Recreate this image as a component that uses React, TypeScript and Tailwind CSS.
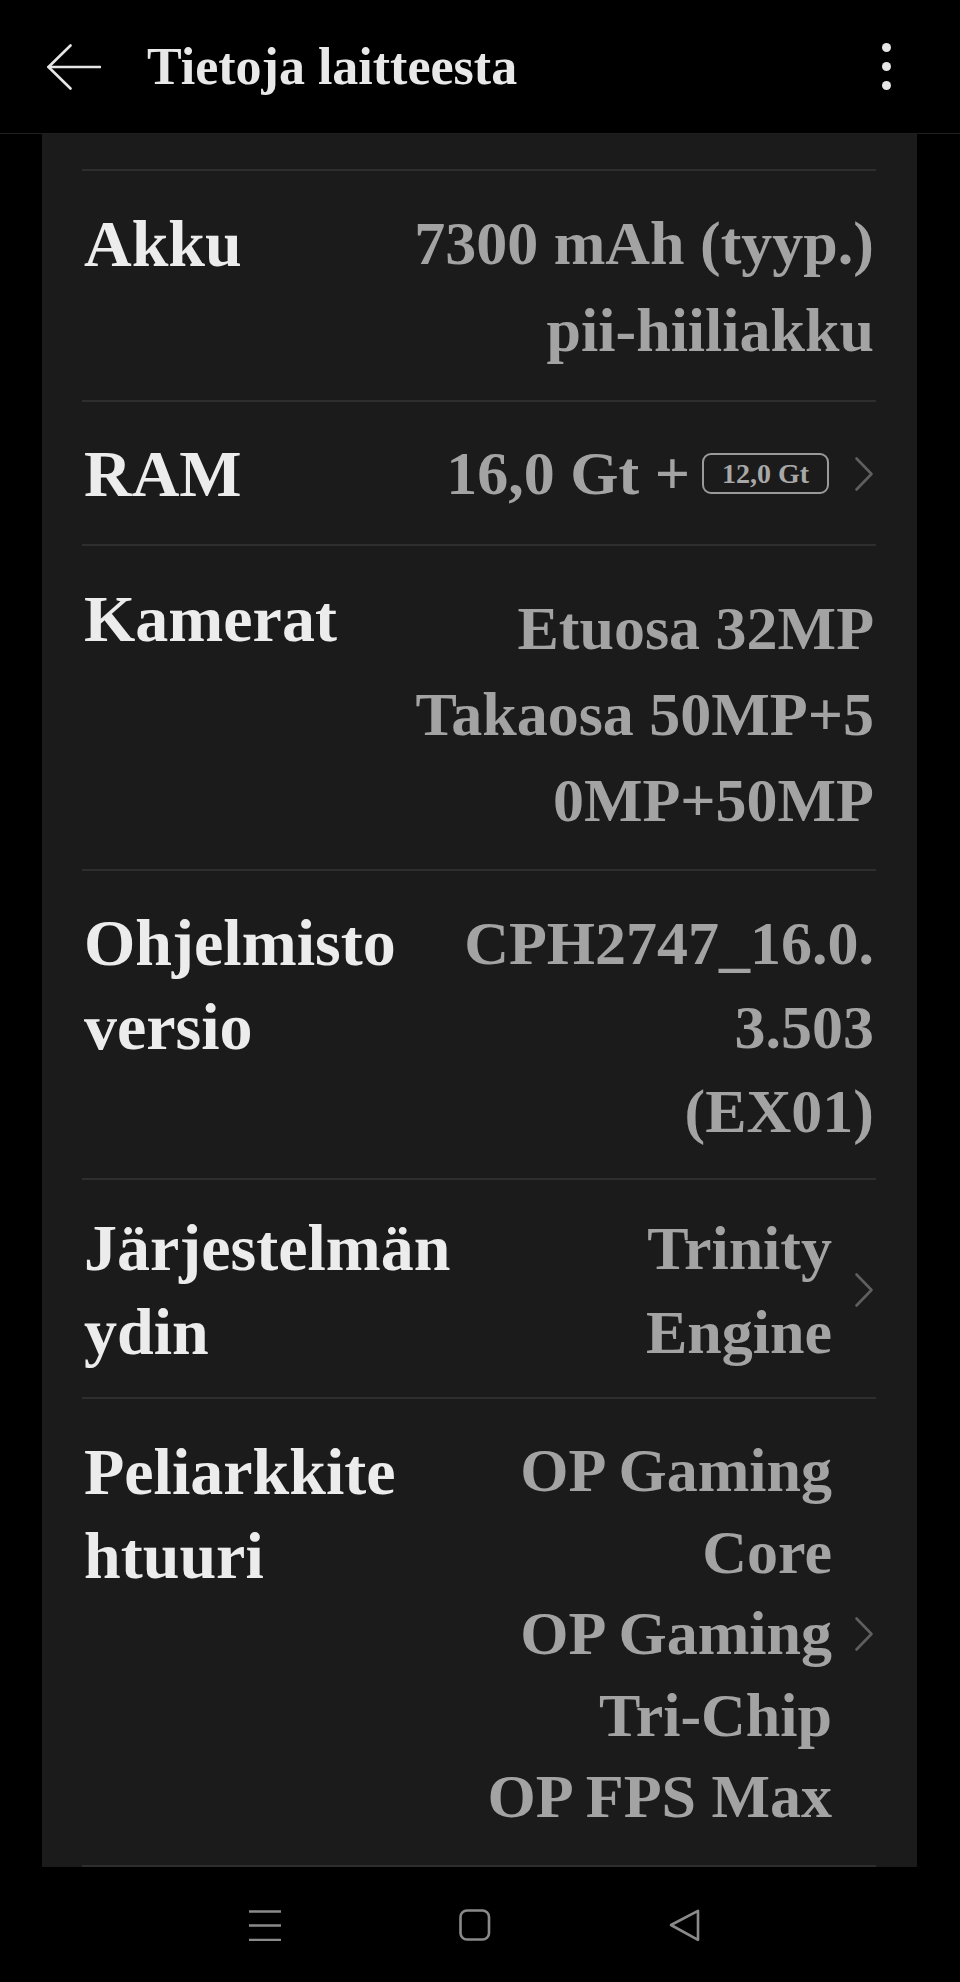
import type { ReactNode } from "react";

type Row = {
  label: string[];
  value: string[];
  rowClass: string;
  labelLeading: string;
  valueLeading: string;
  valueClass?: string;
  chevron?: boolean;
};

const rowsTop: Row[] = [
  {
    label: ["Akku"],
    value: ["7300 mAh (tyyp.)", "pii-hiiliakku"],
    rowClass: "pt-[29px] pb-[26px]",
    labelLeading: "leading-[87px]",
    valueLeading: "leading-[87px]",
  },
];

const rowsBottom: Row[] = [
  {
    label: ["Kamerat"],
    value: ["Etuosa 32MP", "Takaosa 50MP+5", "0MP+50MP"],
    rowClass: "pt-[30px] pb-[26px]",
    labelLeading: "leading-[85px]",
    valueLeading: "leading-[86px]",
    valueClass: "mt-[9px]",
  },
  {
    label: ["Ohjelmisto", "versio"],
    value: ["CPH2747_16.0.", "3.503", "(EX01)"],
    rowClass: "pt-[30px] pb-[25px]",
    labelLeading: "leading-[84px]",
    valueLeading: "leading-[84px]",
  },
  {
    label: ["Järjestelmän", "ydin"],
    value: ["Trinity", "Engine"],
    rowClass: "pt-[26px] pb-[23px]",
    labelLeading: "leading-[84px]",
    valueLeading: "leading-[84px]",
    chevron: true,
  },
  {
    label: ["Peliarkkite", "htuuri"],
    value: ["OP Gaming", "Core", "OP Gaming", "Tri-Chip", "OP FPS Max"],
    rowClass: "pt-[31px] pb-[27.5px]",
    labelLeading: "leading-[84px]",
    valueLeading: "leading-[81.5px]",
    chevron: true,
  },
];

function Divider() {
  return <div className="h-[2px] bg-[#2e2e2e]" />;
}

function Chevron() {
  return (
    <svg width="20" height="36" viewBox="0 0 20 36" fill="none" className="mr-[2px] shrink-0">
      <path
        d="M2.5 2.5 L17.5 18 L2.5 33.5"
        stroke="#5f5f5f"
        strokeWidth="2.6"
        strokeLinecap="round"
        strokeLinejoin="round"
      />
    </svg>
  );
}

function Lines({ lines }: { lines: string[] }) {
  return (
    <>
      {lines.map((line, i) => (
        <div key={i} className="whitespace-nowrap">
          {line}
        </div>
      ))}
    </>
  );
}

function InfoRow({ row }: { row: Row }) {
  return (
    <div className={`flex items-start justify-between ${row.rowClass}`}>
      <div className={`pl-[2px] text-[66px] text-[#ececec] ${row.labelLeading}`}>
        <Lines lines={row.label} />
      </div>
      <div className={`flex items-center gap-[22px] ${row.valueClass ?? ""}`}>
        <div className={`text-right text-[62px] text-[#a3a3a3] ${row.chevron ? "" : "pr-[2px]"} ${row.valueLeading}`}>
          <Lines lines={row.value} />
        </div>
        {row.chevron && <Chevron />}
      </div>
    </div>
  );
}

function NavIcon({ children }: { children: ReactNode }) {
  return (
    <svg width="32" height="32" viewBox="0 0 32 32" fill="none" stroke="#8a8a8a" strokeWidth="2.6">
      {children}
    </svg>
  );
}

export default function App() {
  return (
    <div className="flex min-h-[1982px] w-full flex-col bg-black font-['Liberation_Serif','Times_New_Roman',serif] font-bold">
      {/* Header */}
      <header className="flex h-[134px] shrink-0 items-center border-b border-[#1f1f1f] pl-[47px]">
        <svg width="54" height="46" viewBox="0 0 54 46" fill="none" stroke="#e6e6e6" strokeWidth="2.6" strokeLinecap="round" strokeLinejoin="round">
          <path d="M1.5 23 H53" />
          <path d="M23.5 1.5 L1.5 23 L23.5 44.5" />
        </svg>
        <h1 className="ml-[46px] text-[52px] leading-[60px] text-[#e8e8e8]">Tietoja laitteesta</h1>
        <div className="ml-auto mr-[69px] flex flex-col gap-[10px]">
          <div className="h-[9px] w-[9px] rounded-full bg-[#e6e6e6]" />
          <div className="h-[9px] w-[9px] rounded-full bg-[#e6e6e6]" />
          <div className="h-[9px] w-[9px] rounded-full bg-[#e6e6e6]" />
        </div>
      </header>

      {/* Card */}
      <main className="ml-[42px] w-[875px] bg-[#1b1b1b] pl-[40px] pr-[41px]">
        <div className="h-[35px]" />
        <Divider />
        {rowsTop.map((row) => (
          <InfoRow key={row.label.join(" ")} row={row} />
        ))}
        <Divider />
        <div className="flex items-center justify-between pt-[28px] pb-[27px]">
          <div className="pl-[2px] text-[66px] leading-[87px] text-[#ececec]">RAM</div>
          <div className="flex items-center">
            <span className="whitespace-nowrap text-[62px] leading-[87px] text-[#a3a3a3]">16,0 Gt +</span>
            <span className="ml-[12px] flex h-[41px] w-[127px] items-center justify-center rounded-[9px] border-2 border-[#9a9a9a] text-[28px] leading-none text-[#a8a8a8]">
              12,0 Gt
            </span>
            <span className="ml-[25px] flex">
              <Chevron />
            </span>
          </div>
        </div>
        {rowsBottom.map((row) => (
          <div key={row.label.join(" ")}>
            <Divider />
            <InfoRow row={row} />
          </div>
        ))}
        <Divider />
      </main>

      {/* Navigation bar */}
      <nav className="flex h-[115px] shrink-0 items-center gap-[178px] pl-[249px]">
        <NavIcon>
          <path d="M0 2.5 H32 M0 16.5 H32 M0 31 H32" />
        </NavIcon>
        <NavIcon>
          <rect x="1.5" y="1.5" width="28.5" height="29" rx="6.5" />
        </NavIcon>
        <NavIcon>
          <path d="M2 16 L29 1.8 L29 30.8 Z" strokeLinejoin="round" />
        </NavIcon>
      </nav>
    </div>
  );
}
